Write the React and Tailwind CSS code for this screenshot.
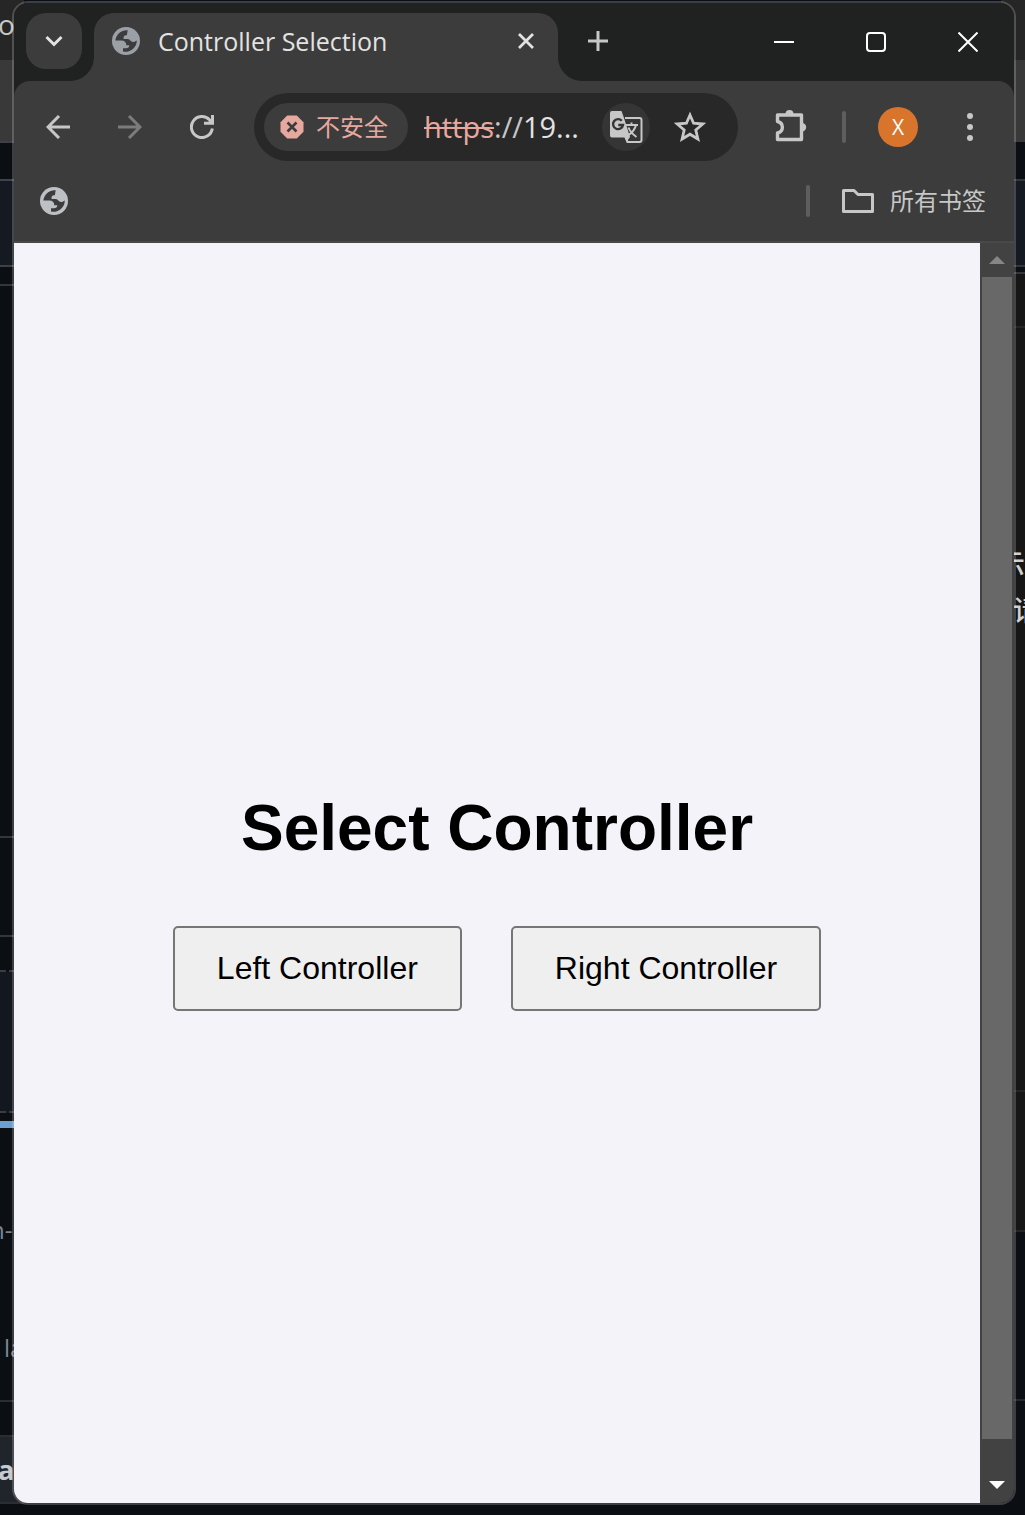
const ui = 'font-["Open_Sans","Noto_Sans_CJK_SC",sans-serif]';

function Globe({ className }) {
  return (
    <svg viewBox="0 0 28 28" className={className} aria-hidden="true">
      <circle cx="14" cy="14" r="14" fill="currentColor" />
      <path
        d="M15.800 3.200C12 2.900 8.800 4.200 6.500 6.700C4.700 8.600 3.600 11 3.300 13.600H9.500C12.500 13.600 14 15.200 14.300 18.200H17.200C17.300 20.500 15.800 21.300 13.800 21.200H11V24.400C16.500 25.800 22.300 22.500 24.200 17.200C24.600 16 24.800 14.500 24.700 13.200C23.300 14.800 21 15.500 19.500 14.500C18 13.600 17.800 12.200 15.500 12H11.600C11.300 9.800 12 8.500 14 8.300C15.700 8.200 14.800 6 15.800 3.200Z"
        fill="#3c3c3c"
      />
    </svg>
  );
}

function WindowButton({ label, children }) {
  return (
    <button type="button" aria-label={label} className="flex h-full w-[92px] items-center justify-center text-white">
      <svg viewBox="0 0 20 20" className="size-5" fill="none" stroke="currentColor" strokeWidth="2" aria-hidden="true">
        {children}
      </svg>
    </button>
  );
}

function NavButton({ label, className, children }) {
  return (
    <button type="button" aria-label={label} className={`flex h-12 w-[72px] shrink-0 items-center justify-center ${className}`}>
      <svg viewBox="0 0 24 24" className="size-6" fill="none" stroke="currentColor" strokeWidth="3" aria-hidden="true">
        {children}
      </svg>
    </button>
  );
}

function TabStrip() {
  return (
    <div className="flex h-[78px] bg-[#202221] pl-3">
      <button
        type="button"
        aria-label="Search tabs"
        className="mt-2.5 flex size-14 shrink-0 items-center justify-center rounded-[20px] bg-[#3c3c3c] text-[#e3e3e3]"
      >
        <svg viewBox="0 0 18 12" className="h-3 w-[18px]" fill="none" stroke="currentColor" strokeWidth="3" aria-hidden="true">
          <path d="M1.500 2L9 9.500L16.500 2" />
        </svg>
      </button>
      <div className="relative mt-2.5 ml-3 flex w-[464px] items-start rounded-t-[20px] bg-[#3c3c3c] pr-5 pl-[18px] text-[#e3e3e3]">
        <svg viewBox="0 0 24 24" className="absolute bottom-0 -left-6 size-6" aria-hidden="true">
          <path d="M24 0V24H0A24 24 0 0 0 24 0Z" fill="#3c3c3c" />
        </svg>
        <svg viewBox="0 0 24 24" className="absolute -right-6 bottom-0 size-6" aria-hidden="true">
          <path d="M0 0V24H24A24 24 0 0 1 0 0Z" fill="#3c3c3c" />
        </svg>
        <div className="flex h-14 flex-1 items-center">
          <Globe className="size-7 text-[#9aa0a6]" />
          <span className={`ml-[18px] flex-1 truncate text-[25px] leading-9 ${ui}`}>Controller Selection</span>
          <button type="button" aria-label="Close tab" className="flex size-6 items-center justify-center">
            <svg viewBox="0 0 16 16" className="size-4" fill="none" stroke="currentColor" strokeWidth="2.800" aria-hidden="true">
              <path d="M1 1L15 15M15 1L1 15" />
            </svg>
          </button>
        </div>
      </div>
      <button type="button" aria-label="New tab" className="mt-2.5 ml-4 flex h-14 w-12 items-center justify-center text-[#c7c7c7]">
        <svg viewBox="0 0 20 20" className="size-5" stroke="currentColor" strokeWidth="3" aria-hidden="true">
          <path d="M10 0V20M0 10H20" />
        </svg>
      </button>
      <div className="ml-auto flex">
        <WindowButton label="Minimize">
          <path d="M0 10H20" />
        </WindowButton>
        <WindowButton label="Maximize">
          <rect x="1" y="1" width="18" height="18" rx="3" />
        </WindowButton>
        <WindowButton label="Close">
          <path d="M0.500 0.500L19.500 19.500M19.500 0.500L0.500 19.500" />
        </WindowButton>
      </div>
    </div>
  );
}

function Omnibox() {
  return (
    <div className="ml-4 flex h-[68px] min-w-0 flex-1 items-center rounded-full bg-[#282828] pr-6 pl-2.5">
      <button
        type="button"
        className={`flex h-12 shrink-0 items-center rounded-full bg-[#3c3c3c] pr-5 pl-4 text-[24px] leading-8 text-[#e6a89f] ${ui}`}
      >
        <svg viewBox="0 0 24 24" className="mr-3 size-6" aria-hidden="true">
          <path d="M7.200 0.500H16.800L23.500 7.200V16.800L16.800 23.500H7.200L0.500 16.800V7.200Z" fill="currentColor" />
          <path d="M7.500 7.500L16.500 16.500M16.500 7.500L7.500 16.500" stroke="#3c3c3c" strokeWidth="2.600" />
        </svg>
        不安全
      </button>
      <div className={`ml-4 min-w-0 flex-1 whitespace-nowrap text-[29px] leading-9 text-[#e3e3e3] ${ui}`}>
        <span className="text-[#e6a89f] line-through decoration-2">https</span>
        <span className="text-[#c7c7c7]">://</span>19...
      </div>
      <button type="button" aria-label="Translate this page" className="flex size-12 shrink-0 items-center justify-center rounded-full bg-[#353535] text-[#c7c7c7]">
        <svg viewBox="0 0 34 34" className="size-[34px]" fill="none" aria-hidden="true">
          <path d="M16 8H30.500Q32.500 8 32.500 10V30Q32.500 32 30.500 32H18.500L16 26" stroke="currentColor" strokeWidth="2" />
          <path d="M3 1H12.500L15 8L21 27L17.500 32L16 27.500H3Q1 27.500 1 25.500V3Q1 1 3 1Z" fill="currentColor" />
          <path d="M12.800 10.800A5 5 0 1 0 14 15H9.300" stroke="#353535" strokeWidth="2.400" />
          <path d="M17 15H29M22.500 12.500V15M27 15C26 19.500 22 23.500 19 25.500M19.500 17.500C21 21.500 24 24.500 27.500 27" stroke="currentColor" strokeWidth="2" />
        </svg>
      </button>
      <button type="button" aria-label="Bookmark this tab" className="ml-4 flex size-12 shrink-0 items-center justify-center text-[#c7c7c7]">
        <svg viewBox="0 0 32 32" className="size-8" fill="none" stroke="currentColor" strokeWidth="2.800" aria-hidden="true">
          <path d="M16 4L19.600 12.200L28.800 13L21.800 19L23.900 28L16 23.200L8.100 28L10.200 19L3.200 13L12.400 12.200Z" />
        </svg>
      </button>
    </div>
  );
}

function Toolbar() {
  return (
    <div className="bg-[#202221]">
      <div className="flex items-center rounded-t-2xl bg-[#3c3c3c] pt-3 pr-5 pl-2">
        <NavButton label="Back" className="text-[#c7c7c7]">
          <path d="M24 12H2M13 1L2 12L13 23" />
        </NavButton>
        <NavButton label="Forward" className="text-[#7c7c7c]">
          <path d="M0 12H22M11 1L22 12L11 23" />
        </NavButton>
        <NavButton label="Reload" className="text-[#c7c7c7]">
          <path d="M22.300 13.500A10.500 10.500 0 1 1 19.500 4.800L22.500 8M22.500 0V8.300H14" />
          <path d="M22.500 3V8.500H16.500Z" fill="currentColor" stroke="none" />
        </NavButton>
        <Omnibox />
        <button type="button" aria-label="Extensions" className="ml-7 flex size-12 items-center justify-center text-[#c7c7c7]">
          <svg viewBox="0 0 36 36" className="size-9" aria-hidden="true">
            <path
              d="M5.500 6H29.500V30.500H5.500V24C12 22.500 12 14 5.500 12.500Z"
              fill="none"
              stroke="currentColor"
              strokeWidth="3.400"
              strokeLinejoin="round"
            />
            <path d="M13.500 5A4 4 0 0 1 21.500 5ZM30 14A4.200 4.200 0 0 1 30 22.400Z" fill="currentColor" />
          </svg>
        </button>
        <span className="ml-7 h-8 w-1 rounded-full bg-[#5e5e5e]" />
        <button type="button" aria-label="Profile" className={`ml-8 size-10 rounded-full bg-[#d8742c] text-[21px] leading-10 text-white ${ui}`}>
          X
        </button>
        <button type="button" aria-label="Menu" className="ml-7 flex size-12 items-center justify-center text-[#c7c7c7]">
          <svg viewBox="0 0 6 28" className="h-7 w-1.5" fill="currentColor" aria-hidden="true">
            <circle cx="3" cy="3" r="3" />
            <circle cx="3" cy="14" r="3" />
            <circle cx="3" cy="25" r="3" />
          </svg>
        </button>
      </div>
    </div>
  );
}

function BookmarksBar() {
  return (
    <div className={`flex h-[82px] items-center border-b-2 border-[#4a4848] bg-[#3c3c3c] pr-7 pl-6 text-[24px] leading-8 text-[#c7c7c7] ${ui}`}>
      <button type="button" aria-label="Bookmark" className="flex size-8 items-center justify-center">
        <Globe className="size-7 text-[#bdc1c6]" />
      </button>
      <span className="ml-auto h-8 w-1 rounded-full bg-[#5e5e5e]" />
      <button type="button" className="ml-8 flex items-center">
        <svg viewBox="0 0 32 24" className="mr-4 h-6 w-8" fill="none" stroke="currentColor" strokeWidth="3" strokeLinejoin="round" aria-hidden="true">
          <path d="M1.500 1.500H12L16 5.500H30.500V22.500H1.500Z" />
        </svg>
        所有书签
      </button>
    </div>
  );
}

function Page() {
  return (
    <div className="flex flex-1 bg-[#424242]">
      <main className='flex flex-1 flex-col items-center justify-center bg-[#f4f3f9] pt-14 font-["Liberation_Sans",Arial,sans-serif] text-black'>
        <h1 className="text-[64px] leading-[72px] font-bold">Select Controller</h1>
        <div className="mt-[62px] flex gap-[49px]">
          <button type="button" className="rounded-[5px] border-2 border-[#767676] bg-[#efefef] px-[42px] py-[22px] text-[32px] leading-[37px]">
            Left Controller
          </button>
          <button type="button" className="rounded-[5px] border-2 border-[#767676] bg-[#efefef] px-[42px] py-[22px] text-[32px] leading-[37px]">
            Right Controller
          </button>
        </div>
      </main>
      <div className="flex w-[34px] flex-col items-center">
        <div className="flex h-[34px] items-center">
          <svg viewBox="0 0 16 8" className="h-2 w-4" aria-hidden="true">
            <path d="M0 8L8 0L16 8Z" fill="#868686" />
          </svg>
        </div>
        <div className="w-[30px] flex-1 bg-[#686868]" />
        <div className="flex h-16 items-end pb-3.5">
          <svg viewBox="0 0 16 8" className="h-2 w-4" aria-hidden="true">
            <path d="M0 0L8 8L16 0Z" fill="#fff" />
          </svg>
        </div>
      </div>
    </div>
  );
}

function Backdrop() {
  return (
    <div className="absolute inset-0 flex justify-between overflow-hidden bg-[#0b0e13] font-['Open_Sans',sans-serif]">
      <div className="w-6 overflow-hidden">
        <div className="flex h-[60px] items-start bg-[#262626] pt-2 text-[28px] leading-8 text-[#c7c7c7]"><span className="-ml-0.5">o</span></div>
        <div className="h-[83px] border-b-2 border-[#3d4045] bg-[#393939]" />
        <div className="h-[38px] border-b-2 border-[#3d4450] bg-[#0b0e13]" />
        <div className="h-[86px] border-b-2 border-[#3d4045] bg-[#151922]" />
        <div className="h-[19px] border-b-2 border-[#33363b]" />
        <div className="h-[552px] border-b-2 border-[#33363b]" />
        <div className="h-[99px] border-b-2 border-[#33363b]" />
        <div className="h-[35px] border-b-2 border-dashed border-[#3a3d42]" />
        <div className="h-[141px] border-b-2 border-dashed border-[#3a3d42] bg-[#131720]" />
        <div className="mt-2 h-[7px] bg-[#6c9fd0]" />
        <div className="flex h-[204px] items-center text-[24px] leading-8 text-[#7d8590]"><span className="-ml-2.5">n-</span></div>
        <div className="flex h-[70px] items-end border-b-2 border-[#2a2d31] pb-9 pl-1 text-[24px] leading-8 text-[#7d8590]">la</div>
        <div className="h-[35px] border-b-2 border-[#2a2d31]" />
        <div className="flex h-[67px] items-center border-b-2 border-[#2a2d31] bg-[#20242b] text-[27px] leading-8 font-bold text-[#c7cbd1]"><span className="-ml-0.5">a</span></div>
      </div>
      <div className="w-6 overflow-hidden">
        <div className="h-[60px] bg-[#262626]" />
        <div className="h-[82px] bg-[#393939]" />
        <div className="h-[39px] border-b-2 border-[#33363b] bg-[#0b0e13]" />
        <div className="h-[86px] border-b-2 border-[#33363b] bg-[#151922]" />
        <div className="h-[7px] border-b-2 border-[#33363b]" />
        <div className="h-[54px] border-b-2 border-[#252525] bg-[#161616]" />
        <div className='flex h-[764px] flex-col border-b-2 border-[#252525] bg-[#161616] pt-[212px] pl-3 font-["Noto_Sans_CJK_SC",sans-serif] text-[28px] leading-[46px] font-medium text-[#d0d0d0]'>
          <span className="-ml-4">示</span>
          <span>请</span>
        </div>
        <div className="h-[140px] border-b-2 border-[#252525] bg-[#161616]" />
        <div className="h-[169px] border-b-2 border-[#25282c]" />
      </div>
    </div>
  );
}

export default function App() {
  return (
    <div className="relative flex min-h-screen">
      <Backdrop />
      <div className="relative mt-px mr-[9px] mb-2.5 ml-3 flex flex-1 flex-col overflow-hidden rounded-2xl border-2 border-white/20">
        <TabStrip />
        <Toolbar />
        <BookmarksBar />
        <Page />
      </div>
    </div>
  );
}
